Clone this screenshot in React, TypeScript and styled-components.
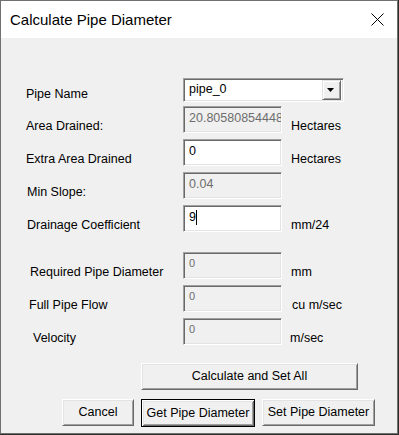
import styled, { createGlobalStyle } from "styled-components";

const UI_FONT = `"Liberation Sans", Arial, sans-serif`;

const GlobalStyle = createGlobalStyle`
  html, body {
    margin: 0;
    padding: 0;
    background: #2a2f2a;
  }
`;

type FieldRow = {
  label: string;
  labelX: number;
  value: string;
  unit?: string;
  unitX?: number;
  top: number;
  editable?: boolean;
  caret?: boolean;
  small?: boolean;
};

const ROWS: FieldRow[] = [
  { label: "Area Drained:", labelX: 26, value: "20.80580854448", unit: "Hectares", unitX: 10, top: 4 },
  { label: "Extra Area Drained", labelX: 26, value: "0", unit: "Hectares", unitX: 10, top: 5, editable: true },
  { label: "Min Slope:", labelX: 27, value: "0.04", top: 5 },
  { label: "Drainage Coefficient", labelX: 27, value: "9", unit: "mm/24", unitX: 10, top: 5, editable: true, caret: true },
  { label: "Required Pipe Diameter", labelX: 30, value: "0", unit: "mm", unitX: 10, top: 19, small: true },
  { label: "Full Pipe Flow", labelX: 29, value: "0", unit: "cu m/sec", unitX: 11, top: 5, small: true },
  { label: "Velocity", labelX: 33, value: "0", unit: "m/sec", unitX: 9, top: 5, small: true },
];

export default function App() {
  return (
    <>
      <GlobalStyle />
      <Window>
        <TitleBar>
          <Title>Calculate Pipe Diameter</Title>
          <CloseIcon width="13" height="13" viewBox="0 0 13 13">
            <path d="M0.5 0.5 L12.5 12.5 M12.5 0.5 L0.5 12.5" stroke="#000" strokeWidth="1" />
          </CloseIcon>
        </TitleBar>
        <Body>
          <Row $top={0}>
            <Label $x={26} $y={9}>
              Pipe Name
            </Label>
            <Combo>
              <ComboText>pipe_0</ComboText>
              <DropButton>
                <svg width="7" height="4" viewBox="0 0 7 4">
                  <path d="M0 0 H7 L3.5 4 Z" fill="#000" />
                </svg>
              </DropButton>
            </Combo>
          </Row>
          {ROWS.map((r) => (
            <Row key={r.label} $top={r.top}>
              <Label $x={r.labelX} $y={13}>
                {r.label}
              </Label>
              <TextBox $editable={!!r.editable} $small={!!r.small}>
                {r.value}
                {r.caret && <Caret />}
              </TextBox>
              {r.unit && (
                <Unit $x={r.unitX ?? 10} $y={13}>
                  {r.unit}
                </Unit>
              )}
            </Row>
          ))}
          <WideRow>
            <Button $width={217}>Calculate and Set All</Button>
          </WideRow>
          <ButtonRow>
            <Button $width={72}>Cancel</Button>
            <Button $width={114} $default>
              Get Pipe Diameter
            </Button>
            <Button $width={113}>Set Pipe Diameter</Button>
          </ButtonRow>
        </Body>
      </Window>
    </>
  );
}

const Window = styled.div`
  width: 398px;
  height: 434px;
  box-sizing: border-box;
  border: 1px solid #707070;
  background: #f0f0f0;
  display: flex;
  flex-direction: column;
  font-family: ${UI_FONT};
`;

const TitleBar = styled.div`
  height: 37px;
  flex: none;
  background: #fff;
  display: flex;
  align-items: flex-start;
  justify-content: space-between;
  padding: 10px 13px 0 9px;
  box-sizing: border-box;
`;

const Title = styled.div`
  font-size: 15px;
  line-height: 18px;
  color: #000;
`;

const CloseIcon = styled.svg`
  margin-top: 2px;
`;

const Body = styled.div`
  flex: 1;
  padding-top: 40px;
  display: flex;
  flex-direction: column;
`;

const Row = styled.div<{ $top: number }>`
  display: grid;
  grid-template-columns: 182px 99px 1fr;
  align-items: start;
  margin-top: ${(p) => p.$top}px;
`;

const Label = styled.div<{ $x: number; $y: number }>`
  padding-left: ${(p) => p.$x - 1}px;
  padding-top: ${(p) => p.$y}px;
  font-size: 12.5px;
  line-height: 15px;
  color: #000;
  white-space: nowrap;
`;

const Unit = styled(Label)``;

const Combo = styled.div`
  grid-column: 2 / span 2;
  width: 161px;
  height: 24px;
  box-sizing: border-box;
  background: #fff;
  border: 1px solid;
  border-color: #a0a0a0 #fff #fff #a0a0a0;
  box-shadow: inset 1px 1px 0 #696969, inset -1px -1px 0 #e3e3e3;
  display: flex;
  align-items: flex-start;
  justify-content: space-between;
  padding: 1px 2px 0 5px;
`;

const ComboText = styled.div`
  padding-top: 2px;
  font-size: 12.5px;
  line-height: 15px;
  color: #000;
`;

const DropButton = styled.div`
  width: 19px;
  height: 20px;
  box-sizing: border-box;
  background: #f0f0f0;
  border: 1px solid;
  border-color: #e3e3e3 #696969 #696969 #e3e3e3;
  box-shadow: inset 1px 1px 0 #fff, inset -1px -1px 0 #a0a0a0;
  display: flex;
  align-items: center;
  justify-content: center;
  padding-right: 2px;
`;

const TextBox = styled.div<{ $editable: boolean; $small: boolean }>`
  width: 99px;
  height: 27px;
  box-sizing: border-box;
  background: ${(p) => (p.$editable ? "#fff" : "#f0f0f0")};
  color: ${(p) => (p.$editable ? "#000" : "#6d6d6d")};
  border: 1px solid;
  border-color: #a0a0a0 #fff #fff #a0a0a0;
  box-shadow: inset 1px 1px 0 #696969, inset -1px -1px 0 #e3e3e3;
  padding: 4px 2px 0 5px;
  font-size: ${(p) => (p.$small ? "11px" : "12.5px")};
  line-height: ${(p) => (p.$small ? "13px" : "15px")};
  white-space: nowrap;
  overflow: hidden;
`;

const Caret = styled.span`
  display: inline-block;
  width: 1px;
  height: 15px;
  background: #000;
  vertical-align: top;
  margin-left: 0.5px;
`;

const WideRow = styled.div`
  display: flex;
  padding-left: 140px;
  margin-top: 17px;
`;

const ButtonRow = styled.div`
  display: flex;
  gap: 7px;
  padding-left: 61px;
  margin-top: 9px;
`;

const Button = styled.div<{ $width: number; $default?: boolean }>`
  width: ${(p) => p.$width}px;
  height: ${(p) => (p.$default ? 28 : 27)}px;
  box-sizing: border-box;
  background: #f0f0f0;
  display: flex;
  align-items: center;
  justify-content: center;
  font-size: 12.5px;
  line-height: 15px;
  color: #000;
  white-space: nowrap;
  border: 1px solid;
  border-color: ${(p) => (p.$default ? "#000" : "#fff #696969 #696969 #fff")};
  box-shadow: ${(p) =>
    p.$default
      ? "inset 1px 1px 0 #fff, inset -1px -1px 0 #696969, inset 2px 2px 0 #e3e3e3, inset -2px -2px 0 #a0a0a0"
      : "inset 1px 1px 0 #e3e3e3, inset -1px -1px 0 #a0a0a0"};
`;
